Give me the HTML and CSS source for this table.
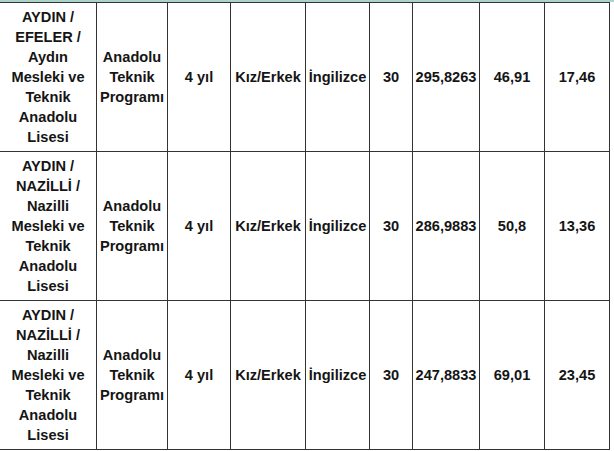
FILE: index.html
```html
<!DOCTYPE html>
<html lang="tr">
<head>
<meta charset="utf-8">
<link rel="stylesheet" href="styles.css">
</head>
<body>
<div class="topline"></div>
<table class="grid">
  <colgroup>
    <col class="c1"><col class="c2"><col class="c3"><col class="c4"><col class="c5"><col class="c6"><col class="c7"><col class="c8"><col class="c9">
  </colgroup>
  <tr>
    <td>AYDIN / EFELER / Aydın Mesleki ve Teknik Anadolu Lisesi</td>
    <td>Anadolu Teknik Programı</td>
    <td>4 yıl</td>
    <td>Kız/Erkek</td>
    <td>İngilizce</td>
    <td>30</td>
    <td>295,8263</td>
    <td>46,91</td>
    <td>17,46</td>
  </tr>
  <tr>
    <td>AYDIN / NAZİLLİ / Nazilli Mesleki ve Teknik Anadolu Lisesi</td>
    <td>Anadolu Teknik Programı</td>
    <td>4 yıl</td>
    <td>Kız/Erkek</td>
    <td>İngilizce</td>
    <td>30</td>
    <td>286,9883</td>
    <td>50,8</td>
    <td>13,36</td>
  </tr>
  <tr>
    <td>AYDIN / NAZİLLİ / Nazilli Mesleki ve Teknik Anadolu Lisesi</td>
    <td>Anadolu Teknik Programı</td>
    <td>4 yıl</td>
    <td>Kız/Erkek</td>
    <td>İngilizce</td>
    <td>30</td>
    <td>247,8833</td>
    <td>69,01</td>
    <td>23,45</td>
  </tr>
</table>
</body>
</html>
```
FILE: styles.css
```css
html, body {
  margin: 0;
  padding: 0;
  background: #fff;
}
body {
  font-family: "Liberation Sans", Arial, sans-serif;
  color: #151515;
  overflow: hidden;
}
.topline {
  height: 2px;
  background: #a9d3cb;
}
.grid {
  border-collapse: collapse;
  table-layout: fixed;
  width: 610px;
  margin-left: -1px;
}
.c1 { width: 97px; }
.c2 { width: 71px; }
.c3 { width: 63px; }
.c4 { width: 75px; }
.c5 { width: 64px; }
.c6 { width: 43px; }
.c7 { width: 67px; }
.c8 { width: 65px; }
.c9 { width: 65px; }
.grid td {
  border: 1px solid #333;
  padding: 4px 1px;
  font-size: 14.6px;
  font-weight: bold;
  line-height: 20px;
  text-align: center;
  vertical-align: middle;
  white-space: normal;
  overflow: hidden;
}
.grid td:first-child {
  padding-left: 6px;
  padding-right: 6px;
}
.grid tr td:nth-child(4),
.grid tr td:nth-child(5),
.grid tr td:nth-child(7) {
  white-space: nowrap;
  padding: 4px 0;
}
```
